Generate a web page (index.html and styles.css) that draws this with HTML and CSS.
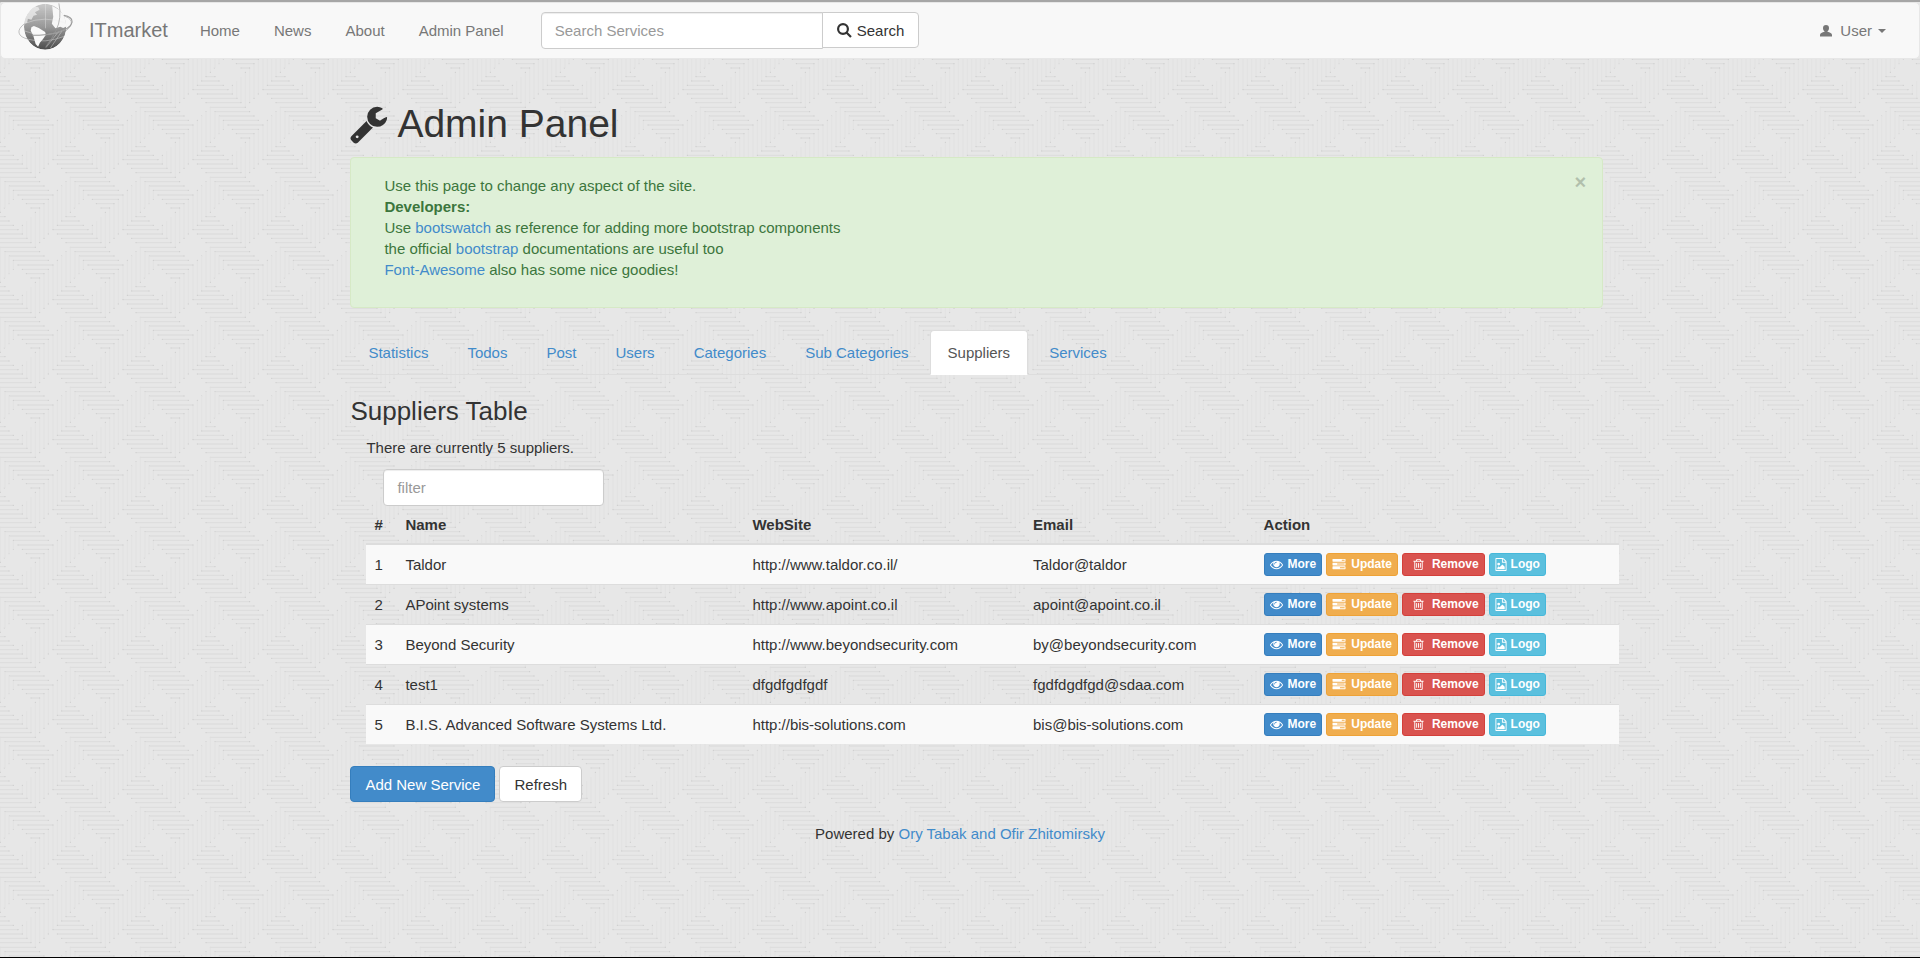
FILE: index.html
```
<!DOCTYPE html>
<html lang="en">
<head>
    <meta charset="utf-8">
    <title>ITmarket - Admin Panel</title>
    <link rel="stylesheet" href="styles.css">
</head>
<body>
    <!-- icon sprite -->
    <svg class="sprite">
        <symbol id="wrench" viewBox="64 0 1700 1792"><path d="M448 1472q0-26-19-45t-45-19-45 19-19 45 19 45 45 19 45-19 19-45zm644-420l-682 682q-37 37-90 37-52 0-91-37l-106-108q-38-36-38-90 0-53 38-91l681-681q39 98 114.5 173.5t173.5 114.5zm634-435q0 39-23 106-47 134-164.5 217.5t-258.5 83.5q-185 0-316.5-131.5t-131.5-316.5 131.5-316.5 316.5-131.5q58 0 121.5 16.5t107.5 46.5q16 11 16 28t-16 28l-293 169v224l193 107q5-3 79-48.5t135.5-81 70.5-35.5q15 0 23.5 10t8.5 25z"/></symbol>
        <symbol id="eye" viewBox="0 0 1792 1792"><path d="M1664 960q-152-236-381-353 61 104 61 225 0 185-131.5 316.5t-316.5 131.5-316.5-131.5-131.5-316.5q0-121 61-225-229 117-381 353 133 205 333.5 326.5t434.5 121.5 434.5-121.5 333.5-326.5zm-720-384q0-20-14-34t-34-14q-125 0-214.5 89.5t-89.5 214.5q0 20 14 34t34 14 34-14 14-34q0-86 61-147t147-61q20 0 34-14t14-34zm848 384q0 34-20 69-140 230-376.5 368.5t-499.5 138.5-499.5-139-376.5-368q-20-35-20-69t20-69q140-229 376.5-368t499.5-139 499.5 139 376.5 368q20 35 20 69z"/></symbol>
        <symbol id="tasks" viewBox="0 0 1792 1792"><path d="M1024 1408h640v-128h-640v128zm-384-512h1024v-128h-1024v128zm640-512h384v-128h-384v128zm512 832v256q0 26-19 45t-45 19h-1664q-26 0-45-19t-19-45v-256q0-26 19-45t45-19h1664q26 0 45 19t19 45zm0-512v256q0 26-19 45t-45 19h-1664q-26 0-45-19t-19-45v-256q0-26 19-45t45-19h1664q26 0 45 19t19 45zm0-512v256q0 26-19 45t-45 19h-1664q-26 0-45-19t-19-45v-256q0-26 19-45t45-19h1664q26 0 45 19t19 45z"/></symbol>
        <symbol id="trash" viewBox="0 0 1792 1792"><path d="M704 736v576q0 14-9 23t-23 9h-64q-14 0-23-9t-9-23v-576q0-14 9-23t23-9h64q14 0 23 9t9 23zm256 0v576q0 14-9 23t-23 9h-64q-14 0-23-9t-9-23v-576q0-14 9-23t23-9h64q14 0 23 9t9 23zm256 0v576q0 14-9 23t-23 9h-64q-14 0-23-9t-9-23v-576q0-14 9-23t23-9h64q14 0 23 9t9 23zm128 724v-948h-896v948q0 22 7 40.5t14.5 27 10.5 8.5h832q3 0 10.5-8.5t14.5-27 7-40.5zm-672-1076h448l-48-117q-7-9-17-11h-317q-10 2-17 11zm928 32v64q0 14-9 23t-23 9h-96v948q0 83-47 143.5t-113 60.5h-832q-66 0-113-58.5t-47-141.5v-952h-96q-14 0-23-9t-9-23v-64q0-14 9-23t23-9h309l70-167q15-37 54-63t79-26h320q40 0 79 26t54 63l70 167h309q14 0 23 9t9 23z"/></symbol>
        <symbol id="image" viewBox="128 0 1536 1792"><path d="M1596 380q28 28 48 76t20 88v1152q0 40-28 68t-68 28h-1344q-40 0-68-28t-28-68v-1600q0-40 28-68t68-28h896q40 0 88 20t76 48zm-444-244v376h376q-10-29-22-41l-313-313q-12-12-41-22zm384 1528v-1024h-416q-40 0-68-28t-28-68v-416h-768v1536h1280zm-128-448v320h-1024v-192l192-192 128 128 384-384zm-832-192q-80 0-136-56t-56-136 56-136 136-56 136 56 56 136-56 136-136 56z"/></symbol>
    </svg>

    <nav class="navbar">
        <a class="logo" href="#" aria-label="ITmarket">
            <svg viewBox="50 9 156 141" preserveAspectRatio="none">
                <defs>
                    <linearGradient id="globe" x1="0" y1="0" x2="0" y2="1">
                        <stop offset="0" stop-color="#cacaca"/>
                        <stop offset="0.5" stop-color="#999"/>
                        <stop offset="1" stop-color="#4c4c4c"/>
                    </linearGradient>
                    <clipPath id="ball"><ellipse cx="127" cy="80" rx="60" ry="69"/></clipPath>
                </defs>
                <ellipse cx="127" cy="82" rx="76" ry="34" transform="rotate(-13 127 82)" fill="none" stroke="#aaa" stroke-width="2"/>
                <g clip-path="url(#ball)">
                    <ellipse cx="127" cy="80" rx="60" ry="69" fill="url(#globe)"/>
                    <path d="M66 60l16-28 14-13 12 3 3 7-13 8 6 7-10 3-6 12-10-3-2 12-10 4z" fill="#f2f2f2" opacity=".7"/>
                    <path d="M88 82l7-4 14 6 18 12 2 8-8 13-9 11-5 12-7-8-7-26-7-14z" fill="#fafafa"/>
                    <path d="M147 18l20 11 18 22 5 27-12 6-8-4-14 5-10-14 4-21z" fill="#f7f7f7"/>
                    <g fill="none" stroke="#eee" stroke-width="1.5" opacity=".75">
                        <path d="M128 12v73M70 70q55-25 118 0M66 92q62 28 124-6M75 117q52 15 106-8"/>
                        <path d="M165 95l-36 48M176 91l-34 53"/>
                    </g>
                </g>
                <path d="M166 10q9 44-8 81-13 29-29 49" fill="none" stroke="#999" stroke-width="2"/>
                <path d="M180 46q26 5 23 22-3 18-45 30-38 9-68 8" fill="none" stroke="#999" stroke-width="3"/>
            </svg>
        </a>
        <a class="brand" href="#">ITmarket</a>
        <ul class="menu">
            <li><a href="#">Home</a></li>
            <li><a href="#">News</a></li>
            <li><a href="#">About</a></li>
            <li><a href="#">Admin Panel</a></li>
        </ul>
        <form class="search">
            <input class="form-control" type="text" placeholder="Search Services" aria-label="Search Services">
            <button class="btn btn-default" type="button"><svg class="icon-search" viewBox="0 0 15 15"><circle cx="6" cy="6" r="4.900"/><path d="M9.500 9.500L14 14"/></svg>Search</button>
        </form>
        <a class="user" href="#"><svg class="icon-user" viewBox="0 0 12 12"><path d="M6 0C8 0 9 1.300 9 3c0 1.500-.6 2.600-1.500 3.200v.5c2.300.6 4.500 1.500 4.500 3.300V11.500H0V10c0-1.800 2.200-2.700 4.500-3.300v-.5C3.600 5.600 3 4.500 3 3c0-1.700 1-3 3-3z"/></svg>User<span class="caret"></span></a>
    </nav>

    <main class="content">
        <h1><svg class="icon-wrench"><use href="#wrench"/></svg>Admin Panel</h1>

        <div class="alert">
            <button class="close" type="button" aria-label="Close">×</button>
            <p>Use this page to change any aspect of the site.<br>
                <strong>Developers:</strong><br>
                Use <a href="#">bootswatch</a> as reference for adding more bootstrap components<br>
                the official <a href="#">bootstrap</a> documentations are useful too<br>
                <a href="#">Font-Awesome</a> also has some nice goodies!</p>
        </div>

        <ul class="tabs">
            <li><a href="#">Statistics</a></li>
            <li><a href="#">Todos</a></li>
            <li><a href="#">Post</a></li>
            <li><a href="#">Users</a></li>
            <li><a href="#">Categories</a></li>
            <li><a href="#">Sub Categories</a></li>
            <li class="active"><a href="#">Suppliers</a></li>
            <li><a href="#">Services</a></li>
        </ul>

        <h3>Suppliers Table</h3>
        <div class="suppliers">
            <p>There are currently 5 suppliers.</p>
            <input class="form-control filter" type="text" placeholder="filter" aria-label="filter">
            <table>
                <thead>
                    <tr>
                        <th class="col-id">#</th>
                        <th class="col-name">Name</th>
                        <th class="col-site">WebSite</th>
                        <th class="col-email">Email</th>
                        <th>Action</th>
                    </tr>
                </thead>
                <tbody>
                    <tr>
                        <td>1</td>
                        <td>Taldor</td>
                        <td>http://www.taldor.co.il/</td>
                        <td>Taldor@taldor</td>
                        <td><div class="actions">
                            <button class="btn-xs more"><svg><use href="#eye"/></svg>More</button>
                            <button class="btn-xs update"><svg><use href="#tasks"/></svg>Update</button>
                            <button class="btn-xs remove"><svg><use href="#trash"/></svg>Remove</button>
                            <button class="btn-xs image"><svg><use href="#image"/></svg>Logo</button>
                        </div></td>
                    </tr>
                    <tr>
                        <td>2</td>
                        <td>APoint systems</td>
                        <td>http://www.apoint.co.il</td>
                        <td>apoint@apoint.co.il</td>
                        <td><div class="actions">
                            <button class="btn-xs more"><svg><use href="#eye"/></svg>More</button>
                            <button class="btn-xs update"><svg><use href="#tasks"/></svg>Update</button>
                            <button class="btn-xs remove"><svg><use href="#trash"/></svg>Remove</button>
                            <button class="btn-xs image"><svg><use href="#image"/></svg>Logo</button>
                        </div></td>
                    </tr>
                    <tr>
                        <td>3</td>
                        <td>Beyond Security</td>
                        <td>http://www.beyondsecurity.com</td>
                        <td>by@beyondsecurity.com</td>
                        <td><div class="actions">
                            <button class="btn-xs more"><svg><use href="#eye"/></svg>More</button>
                            <button class="btn-xs update"><svg><use href="#tasks"/></svg>Update</button>
                            <button class="btn-xs remove"><svg><use href="#trash"/></svg>Remove</button>
                            <button class="btn-xs image"><svg><use href="#image"/></svg>Logo</button>
                        </div></td>
                    </tr>
                    <tr>
                        <td>4</td>
                        <td>test1</td>
                        <td>dfgdfgdfgdf</td>
                        <td>fgdfdgdfgd@sdaa.com</td>
                        <td><div class="actions">
                            <button class="btn-xs more"><svg><use href="#eye"/></svg>More</button>
                            <button class="btn-xs update"><svg><use href="#tasks"/></svg>Update</button>
                            <button class="btn-xs remove"><svg><use href="#trash"/></svg>Remove</button>
                            <button class="btn-xs image"><svg><use href="#image"/></svg>Logo</button>
                        </div></td>
                    </tr>
                    <tr>
                        <td>5</td>
                        <td>B.I.S. Advanced Software Systems Ltd.</td>
                        <td>http://bis-solutions.com</td>
                        <td>bis@bis-solutions.com</td>
                        <td><div class="actions">
                            <button class="btn-xs more"><svg><use href="#eye"/></svg>More</button>
                            <button class="btn-xs update"><svg><use href="#tasks"/></svg>Update</button>
                            <button class="btn-xs remove"><svg><use href="#trash"/></svg>Remove</button>
                            <button class="btn-xs image"><svg><use href="#image"/></svg>Logo</button>
                        </div></td>
                    </tr>
                </tbody>
            </table>
        </div>

        <div class="buttons">
            <button class="btn btn-primary" type="button">Add New Service</button>
            <button class="btn btn-default" type="button">Refresh</button>
        </div>
    </main>

    <footer>Powered by <a href="#">Ory Tabak and Ofir Zhitomirsky</a></footer>
</body>
</html>
```
FILE: styles.css
```
* {
    box-sizing: border-box;
}
body {
    margin: 0;
    min-height: 100vh;
    border-top: 2px solid #a6a6a6;
    border-bottom: 1px solid #000;
    font-family: "Liberation Sans", Arial, sans-serif;
    font-size: 15px;
    line-height: 21px;
    color: #333;
    /* woven 70px tile */
    background: #e7e7e7 url("data:image/svg+xml,%3Csvg xmlns='http://www.w3.org/2000/svg' xmlns:xlink='http://www.w3.org/1999/xlink' width='70' height='70' viewBox='0 0 210 210'%3E%3Cdefs%3E%3Cg id='a' fill='none'%3E%3Cpath stroke='%23e3e3e3' stroke-width='4' d='M54 118v3M67 106v27M80 93v53M93 80v79M106 67v105M119 54v105M132 41v105M145 28v105M159 15v105M172 2v105M185-12V93M198-25V80M211-38V67M225-25V54M237-13V41M250 2v26'/%3E%3Cpath stroke='%23dedede' stroke-width='4' d='M67 28h78M79 41h53M93 54h27M198 80h27M185 93h53M172 106h78M159 119h105M172 132h105M185 145h105M198 158h105M211 172h105M15 185h105M28 198h105M40 211h105M54 225h105'/%3E%3Cpath stroke='%23cacaca' stroke-width='3' stroke-linecap='square' d='M67 28h.1M145 28h.1M79 41h.1M132 41h.1M93 54h.1M119 54h.1M106 67h.1M211 67h.1M198 80h.1M225 80h.1M185 93h.1M237 93h.1M172 106h.1M250 106h.1M159 119h.1M264 119h.1M172 132h.1M277 132h.1M185 145h.1M291 145h.1M198 158h.1M303 158h.1M211 172h.1M316 172h.1M15 185h.1M119 185h.1M28 198h.1M132 198h.1M40 211h.1M145 211h.1M54 225h.1M159 225h.1M40 28h.1M27 41h.1M13 54h.1M67 106h.1M145 132h.1M132 145h.1M119 158h.1M198 185h.1M185 198h.1M172 211h.1'/%3E%3C/g%3E%3C/defs%3E%3Cuse xlink:href='%23a'/%3E%3Cuse xlink:href='%23a' x='-210'/%3E%3Cuse xlink:href='%23a' y='-210'/%3E%3Cuse xlink:href='%23a' y='210'/%3E%3Cuse xlink:href='%23a' x='-210' y='210'/%3E%3Cuse xlink:href='%23a' x='-210' y='-210'/%3E%3C/svg%3E") 0 50px;
}
a {
    color: #428bca;
    text-decoration: none;
}
p, h1, h3, ul {
    margin: 0;
    padding: 0;
}
ul {
    list-style: none;
}
svg {
    fill: currentColor;
}
.sprite {
    display: none;
}

/* navbar */
.navbar {
    display: flex;
    align-items: center;
    height: 57px;
    padding: 0 33px 0 17px;
    background: #f8f8f8;
    border: 1px solid #e7e7e7;
    border-radius: 5px;
}
.navbar a {
    color: #777;
}
.logo {
    align-self: flex-start;
}
.logo svg {
    display: block;
    width: 55px;
    height: 47px;
}
.brand {
    margin-left: 16px;
    margin-right: 15px;
    font-size: 20px;
}
.menu {
    display: flex;
}
.menu a {
    display: block;
    padding: 17px;
}
.search {
    display: flex;
    align-items: flex-start;
    margin-left: 20px;
}
.search .form-control {
    width: 282px;
    border-radius: 4px 0 0 4px;
}
.search .btn {
    margin-left: -1px;
    border-radius: 0 4px 4px 0;
}
.icon-search {
    width: 15px;
    height: 15px;
    margin-right: 5px;
    fill: none;
    stroke: currentColor;
    stroke-width: 2.2;
}
.user {
    display: flex;
    align-items: center;
    margin-left: auto;
}
.icon-user {
    width: 12px;
    height: 12px;
    margin-right: 8px;
}
.caret {
    margin-left: 6px;
    border-top: 4px solid;
    border-left: 4px solid transparent;
    border-right: 4px solid transparent;
}

/* controls */
.form-control {
    height: 37px;
    padding: 0 13px;
    font: inherit;
    background: #fff;
    border: 1px solid #ccc;
    border-radius: 4px;
    box-shadow: inset 0 1px 1px rgba(0,0,0,0.075);
}
.form-control::placeholder {
    color: #999;
}
.btn {
    height: 36px;
    padding: 0 14px;
    font: inherit;
    border: 1px solid #ccc;
    border-radius: 4px;
    cursor: pointer;
}
.search .btn {
    display: flex;
    align-items: center;
}
.btn-default {
    color: #333;
    background: #fff;
}
.btn-primary {
    color: #fff;
    background: #428bca;
    border-color: #357ebd;
}

/* page */
.content {
    margin: 43px 16.5% 0 18.25%;
}
h1 {
    display: flex;
    align-items: center;
    font-size: 39px;
    font-weight: normal;
    line-height: 43px;
}
.icon-wrench {
    width: 38px;
    height: 40px;
    margin-right: 9px;
}
.alert {
    position: relative;
    margin-top: 12px;
    padding: 17px 33px 27px;
    color: #3c763d;
    background: #dff0d8;
    border: 1px solid #d6e9c6;
    border-radius: 4px;
}
.close {
    position: absolute;
    top: 14px;
    right: 16px;
    padding: 0;
    font-family: inherit;
    font-size: 20px;
    font-weight: bold;
    line-height: 21px;
    color: #000;
    background: none;
    border: 0;
    opacity: 0.2;
    cursor: pointer;
}
.tabs {
    display: flex;
    gap: 3px;
    margin-top: 22px;
    border-bottom: 1px solid #ddd;
}
.tabs a {
    display: block;
    margin-bottom: -1px;
    padding: 11px 17px;
    border: 1px solid transparent;
    border-radius: 4px 4px 0 0;
}
.tabs .active a {
    color: #555;
    background: #fff;
    border-color: #ddd #ddd #fff;
}
h3 {
    margin-top: 22px;
    font-size: 26px;
    font-weight: normal;
    line-height: 28px;
}
.suppliers {
    margin: 12px -16px 0 16px;
}
.filter {
    display: block;
    width: 221px;
    margin: 11px 0 0 17px;
}
table {
    width: 100%;
    table-layout: fixed;
    border-collapse: collapse;
}
th, td {
    height: 40px;
    padding: 0 8px;
    text-align: left;
}
th {
    height: 38px;
    border-bottom: 2px solid #ddd;
}
td {
    border-top: 1px solid #ddd;
}
tbody tr:nth-child(odd) {
    background: #f9f9f9;
}
.col-id {
    width: 31px;
}
.col-name {
    width: 27.7%;
}
.col-site {
    width: 22.4%;
}
.col-email {
    width: 18.4%;
}
.actions {
    display: flex;
    gap: 4px;
}
.btn-xs {
    display: flex;
    align-items: center;
    height: 23px;
    padding: 0 5px;
    font-family: inherit;
    font-size: 12px;
    font-weight: bold;
    color: #fff;
    border: 1px solid;
    border-radius: 3px;
    cursor: pointer;
}
.btn-xs svg {
    width: 13px;
    height: 13px;
    margin-right: 5px;
}
.more {
    background: #428bca;
    border-color: #357ebd;
}
.update {
    background: #f0ad4e;
    border-color: #eea236;
}
.update svg {
    width: 14px;
}
.remove {
    background: #d9534f;
    border-color: #d43f3a;
}
.remove svg {
    margin: 0 7px 0 4px;
}
.image {
    background: #5bc0de;
    border-color: #46b8da;
}
.image svg {
    width: 12px;
    margin-right: 4px;
}
.buttons {
    display: flex;
    gap: 4px;
    margin-top: 22px;
}
footer {
    margin-top: 21px;
    text-align: center;
}
```
